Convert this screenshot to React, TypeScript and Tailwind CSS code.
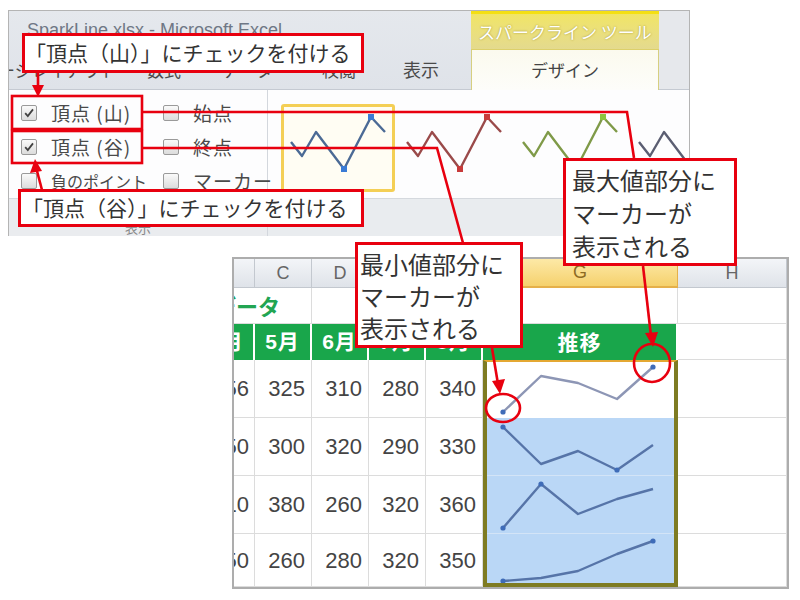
import React from "react"

type Pt = [number, number]

const JP = "font-['Noto_Sans_CJK_JP',sans-serif]"
const RED = "#e8000f"

// gallery thumbnail shape (inside the 3px item border)
const GALLERY: Pt[] = [[7, 35], [18, 49], [32, 25], [60, 62], [87, 10], [101, 25]]

const STYLES = [
  { line: "#4b6a95", mark: "#3a7bd5", selected: true },
  { line: "#9a4a4a", mark: "#c83a3a", selected: false },
  { line: "#7f9a48", mark: "#8cc63f", selected: false },
  { line: "#5b5e72", mark: "#5b5e72", selected: false },
]

const GX = [16, 54, 91, 130, 166]
const GROWS = [
  { h: "h-[56px]", ys: [50, 14, 21, 37, 5], marks: [0, 4], bg: "bg-white", line: "#8d96b5" },
  { h: "h-[58px]", ys: [9, 46, 33, 52, 27], marks: [0, 3], bg: "bg-[#bad7f6] border-b border-[#d3e4f7]", line: "#5674a8" },
  { h: "h-[58px]", ys: [52, 8, 38, 23, 13], marks: [0, 1], bg: "bg-[#bad7f6] border-b border-[#d3e4f7]", line: "#5674a8" },
  { h: "h-[49px]", ys: [47, 44, 37, 20, 7], marks: [0, 4], bg: "bg-[#bad7f6]", line: "#5674a8" },
]

const DATA = [
  ["356", "325", "310", "280", "340"],
  ["350", "300", "320", "290", "330"],
  ["310", "380", "260", "320", "360"],
  ["350", "260", "280", "320", "350"],
]

function CheckBox({ checked }: { checked?: boolean }) {
  return (
    <span className="w-[16px] h-[16px] shrink-0 border border-[#9a9a9a] rounded-[2px] bg-gradient-to-b from-[#fafafa] to-[#dcdcdc] flex items-center justify-center">
      {checked && (
        <svg width="12" height="12" viewBox="0 0 12 12">
          <path d="M2.2 6.2 L4.8 9 L10 2.4" fill="none" stroke="#404040" strokeWidth="1.8" />
        </svg>
      )}
    </span>
  )
}

function Option({ label, checked, small }: { label: string; checked?: boolean; small?: boolean }) {
  return (
    <div className="h-[34px] flex items-center gap-[14px]">
      <CheckBox checked={checked} />
      <span
        className={
          small
            ? "text-[16px] text-[#4a4a4a] whitespace-nowrap"
            : "text-[19px] text-[#4a4a4a] whitespace-nowrap tracking-[1px]"
        }
      >
        {label}
      </span>
    </div>
  )
}

function Spark({
  pts,
  color,
  marks,
  markColor,
  w,
  h,
  square,
}: {
  pts: Pt[]
  color: string
  marks: number[]
  markColor: string
  w: number
  h: number
  square?: boolean
}) {
  return (
    <svg width={w} height={h} className="block">
      <polyline
        points={pts.map((p) => p.join(",")).join(" ")}
        fill="none"
        stroke={color}
        strokeWidth={2.4}
        strokeLinejoin="round"
      />
      {marks.map((i) =>
        square ? (
          <rect key={i} x={pts[i][0] - 3} y={pts[i][1] - 3} width={6} height={6} fill={markColor} />
        ) : (
          <circle key={i} cx={pts[i][0]} cy={pts[i][1]} r={2.6} fill={markColor} />
        )
      )}
    </svg>
  )
}

function Ribbon() {
  return (
    <div className={`ml-[8px] mt-[10px] w-[682px] h-[226px] border border-[#b4b4b4] flex flex-col bg-[#fdfdfe] ${JP}`}>
      {/* title + tabs */}
      <div className="h-[79px] flex">
        <div className="flex-1 flex flex-col bg-gradient-to-b from-[#e5e8ed] to-[#dfe3e9] border-b border-[#c5cad2] overflow-hidden">
          <div className="h-[39px] flex items-center pl-[18px] text-[18px] text-[#6f7785] font-['Liberation_Sans',sans-serif] whitespace-nowrap">
            SparkLine.xlsx - Microsoft Excel
          </div>
          <div className="h-[39px] flex items-center text-[17px] text-[#4a4a4a] whitespace-nowrap">
            <span className="w-[166px] -ml-[28px] shrink-0">ページレイアウト</span>
            <span className="w-[75px] shrink-0">数式</span>
            <span className="w-[100px] shrink-0">データ</span>
            <span className="w-[81px] shrink-0">校閲</span>
            <span className="shrink-0 text-[18px]">表示</span>
          </div>
        </div>
        <div className="w-[188px] flex flex-col">
          <div className="h-[39px] border-t-[3px] border-[#f4df12] border-b border-b-[#ddd06a] bg-gradient-to-b from-[#f1e565] to-[#e4da8e] flex items-center pl-[7px] text-[17px] text-white whitespace-nowrap [text-shadow:0_0_2px_#9d9030]">
            スパークライン ツール
          </div>
          <div className="h-[40px] border-x border-[#d6cf80] bg-gradient-to-b from-[#fbfaee] to-[#fdfdfa] flex items-center justify-center text-[17px] text-[#444]">
            デザイン
          </div>
        </div>
        <div className="w-[30px] bg-[#e6e8ec] border-b border-[#c5cad2]" />
      </div>

      {/* ribbon body */}
      <div className="flex-1 flex">
        <div className="w-[259px] flex flex-col border-r border-[#d3d7dd]">
          <div className="flex-1 pt-[6px] pl-[12px] grid grid-cols-[142px_1fr] content-start">
            <Option label="頂点 (山)" checked />
            <Option label="始点" />
            <Option label="頂点 (谷)" checked />
            <Option label="終点" />
            <Option label="負のポイント" small />
            <Option label="マーカー" />
          </div>
          <div className="h-[38px] bg-[#eaecef] border-t border-[#d5d9de] flex items-end justify-center text-[13px] text-[#888] leading-[16px]">
            表示
          </div>
        </div>
        <div className="flex-1 flex flex-col overflow-hidden">
          <div className="flex-1 pt-[14px] pl-[13px] flex gap-[2px]">
            {STYLES.map((s, i) => (
              <div
                key={i}
                className={
                  s.selected
                    ? "w-[114px] h-[88px] shrink-0 border-[3px] border-[#f4cf55] rounded-[3px] bg-[#fffdf3]"
                    : "w-[114px] h-[88px] shrink-0 border-[3px] border-transparent"
                }
              >
                <Spark pts={GALLERY} color={s.line} marks={i < 3 ? [3, 4] : []} markColor={s.mark} w={108} h={82} square />
              </div>
            ))}
          </div>
          <div className="h-[38px] bg-[#e9ecef] border-t border-[#d5d9de]" />
        </div>
      </div>
    </div>
  )
}

function Sheet() {
  const head = "bg-gradient-to-b from-[#f3f5f8] to-[#dfe3e9] border-r border-b border-[#c3c8cf] flex items-center justify-center text-[18px] text-[#666]"
  const cell = "border-r border-b border-[#dcdcdc]"
  const green = "bg-[#19a64b] border-r-2 border-white flex items-center justify-center text-[21px] font-bold text-white tracking-[1px]"
  const num = "border-r border-b border-[#dcdcdc] flex items-center justify-end pr-[6px] text-[22px] text-[#444]"
  return (
    <div className="ml-[232px] mt-[21px] w-[557px] h-[332px] border-2 border-[#adadad] overflow-hidden grid grid-cols-[21px_57px_57px_57px_57px_195px_109px] grid-rows-[29px_36px_36px_58px_58px_58px_53px] font-['Liberation_Sans','Noto_Sans_CJK_JP',sans-serif] bg-white">
      {/* column header */}
      <div className={head} />
      <div className={head}>C</div>
      <div className={head}>D</div>
      <div className={head}>E</div>
      <div className={head}>F</div>
      <div className="bg-gradient-to-b from-[#fde9a6] to-[#f5d16c] border-r border-b-2 border-[#e5b04a] flex items-center justify-center text-[18px] text-[#8d6b22]">
        G
      </div>
      <div className={head}>H</div>

      {/* title row */}
      <div className="relative z-10 border-b border-[#dcdcdc] flex items-center">
        <span className={`-ml-[20px] shrink-0 whitespace-nowrap text-[22px] font-bold text-[#22a552] ${JP}`}>データ</span>
      </div>
      <div className="border-r border-b border-[#dcdcdc]" />
      <div className={cell} />
      <div className={cell} />
      <div className={cell} />
      <div className={cell} />
      <div className={cell} />

      {/* green header row */}
      <div className={`${green} overflow-hidden justify-start`}>
        <div className="w-[57px] -ml-[36px] shrink-0 text-center">4月</div>
      </div>
      <div className={green}>5月</div>
      <div className={green}>6月</div>
      <div className={green}>7月</div>
      <div className={green}>8月</div>
      <div className={`${green} ${JP}`}>推移</div>
      <div className={cell} />

      {DATA.map((row, r) => (
        <React.Fragment key={r}>
          <div className="border-r border-b border-[#dcdcdc] overflow-hidden flex items-center text-[22px] text-[#444]">
            <div className="w-[57px] -ml-[36px] shrink-0 text-right pr-[6px]">{row[0]}</div>
          </div>
          {row.slice(1).map((v, c) => (
            <div key={c} className={num}>
              {v}
            </div>
          ))}
          {r === 0 && (
            <div className="row-span-4 border-x-4 border-b-4 border-t-2 border-[#7e7b22] border-t-[#e4a832] flex flex-col overflow-hidden">
              {GROWS.map((g, i) => (
                <div key={i} className={`${g.h} shrink-0 ${g.bg}`}>
                  <Spark
                    pts={g.ys.map((y, k) => [GX[k], y] as Pt)}
                    color={g.line}
                    marks={g.marks}
                    markColor="#3f6cb8"
                    w={187}
                    h={58}
                  />
                </div>
              ))}
            </div>
          )}
          <div className={cell} />
        </React.Fragment>
      ))}
    </div>
  )
}

function Callout({ className, children }: { className: string; children: React.ReactNode }) {
  return <div className={`absolute border-[3px] border-[#e8000f] bg-white text-[#333] ${JP} ${className}`}>{children}</div>
}

export default function App() {
  return (
    <div className="relative w-[800px] h-[600px] overflow-hidden bg-white">
      <Ribbon />
      <Sheet />

      {/* leader lines, frames, arrows and rings */}
      <svg className="absolute inset-0 pointer-events-none" width={800} height={600}>
        <g fill="none" stroke={RED} strokeWidth={2.6}>
          <rect x={12} y={96} width={130} height={33} />
          <rect x={12} y={131} width={130} height={32} />
          <polyline points="142,112 627,112 634,158" />
          <polyline points="142,148 437,148 463,243" />
          <line x1={38} y1={73} x2={38} y2={88} />
          <line x1={42} y1={190} x2={37} y2={171} />
          <line x1={643} y1={266} x2={651} y2={336} />
          <line x1={492} y1={348} x2={498} y2={384} />
          <ellipse cx={652} cy={363} rx={18} ry={19} />
          <ellipse cx={503} cy={408} rx={17} ry={14} />
        </g>
        <g fill={RED}>
          <polygon points="32,85 44,85 38,97" />
          <polygon points="30,173 42,171 35,159" />
          <polygon points="645,333 658,332 653,347" />
          <polygon points="492,381 505,379 500,394" />
        </g>
      </svg>

      <Callout className="left-[22px] top-[33px] w-[342px] h-[40px] flex items-center text-[21px] whitespace-nowrap">
        「頂点（山）」にチェックを付ける
      </Callout>
      <Callout className="left-[18px] top-[189px] w-[346px] h-[38px] flex items-center pl-[1px] text-[21px] whitespace-nowrap">
        「頂点（谷）」にチェックを付ける
      </Callout>
      <Callout className="left-[563px] top-[158px] w-[174px] h-[108px] pl-[6px] pt-[2px] text-[24px] leading-[33px]">
        最大値部分に
        <br />
        マーカーが
        <br />
        表示される
      </Callout>
      <Callout className="left-[355px] top-[242px] w-[168px] h-[106px] pl-[2px] pt-[3px] text-[24px] leading-[32px]">
        最小値部分に
        <br />
        マーカーが
        <br />
        表示される
      </Callout>
    </div>
  )
}
